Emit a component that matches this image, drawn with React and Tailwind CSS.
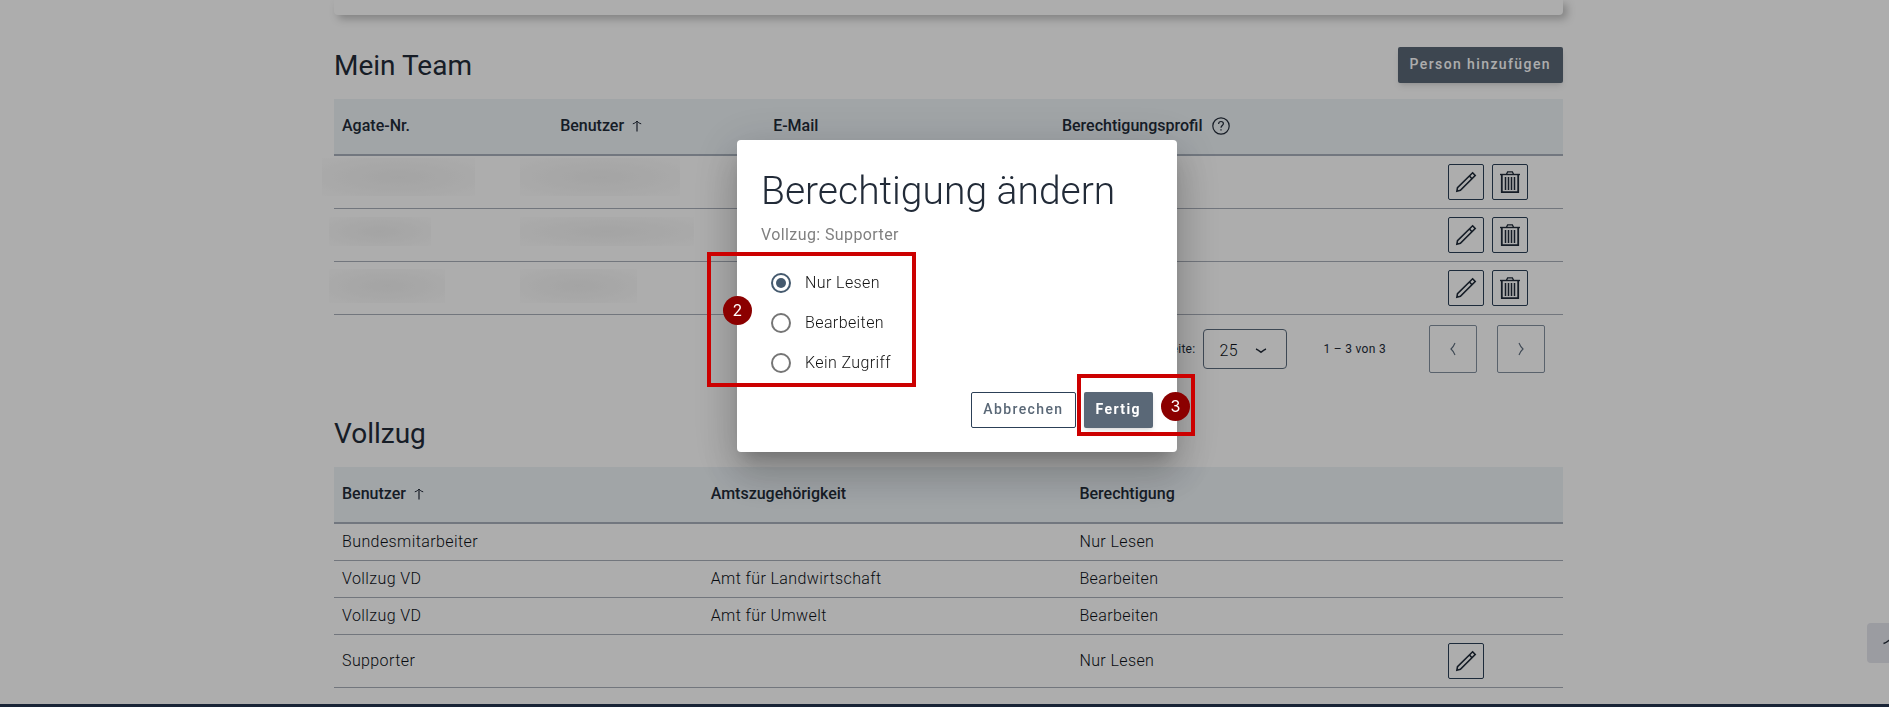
import React from "react";

const teamRows = [
  { first: "ml-[-20px] w-[153px] h-[38px] mt-[2px]", second: "ml-[-40px] w-[160px] h-[38px] mt-[2px]" },
  { first: "ml-[-13px] w-[102px] h-[29px] mt-[8px]", second: "ml-[-40px] w-[174px] h-[29px] mt-[8px]" },
  { first: "ml-[-13px] w-[116px] h-[34px] mt-[7px]", second: "ml-[-40px] w-[117px] h-[34px] mt-[7px]" },
];

const officeRows = [
  { user: "Bundesmitarbeiter", office: "", right: "Nur Lesen" },
  { user: "Vollzug VD", office: "Amt für Landwirtschaft", right: "Bearbeiten" },
  { user: "Vollzug VD", office: "Amt für Umwelt", right: "Bearbeiten" },
  { user: "Supporter", office: "", right: "Nur Lesen", editable: true },
];

const options = ["Nur Lesen", "Bearbeiten", "Kein Zugriff"];

function PencilIcon() {
  return (
    <svg viewBox="0 0 24 24" className="size-6" fill="none" stroke="currentColor" strokeWidth="1.6" aria-hidden="true">
      <path d="M18.6 2.8 21.2 5.5 6.4 20.3 2.9 21.2 3.5 17.7Z" />
      <path d="M15.4 6 18 8.7" />
    </svg>
  );
}

function TrashIcon() {
  return (
    <svg viewBox="0 0 24 24" className="size-6" fill="none" stroke="currentColor" aria-hidden="true">
      <path d="M2 4.5H22" strokeWidth="1.4" />
      <path d="M8.5 4.2 9.6 1.9H14.4L15.5 4.2" strokeWidth="1.3" />
      <path d="M3.8 5V22.2H20.2V5" strokeWidth="1.8" />
      <path d="M7.5 7V20M10.5 7V20M13.5 7V20M16.5 7V20" strokeWidth="1.5" />
    </svg>
  );
}

function SortArrow() {
  return (
    <svg viewBox="0 0 10 12" className="ml-2 h-3 w-2.5" fill="none" stroke="currentColor" aria-hidden="true">
      <path d="M5 1V11.5" strokeWidth="1.2" />
      <path d="M0.8 3.8C2.6 3.4 4 2.4 5 1 6 2.4 7.4 3.4 9.2 3.8" strokeWidth="1" />
    </svg>
  );
}

function IconButton({ label, children }) {
  return (
    <button type="button" aria-label={label} className="flex size-9 items-center justify-center rounded-xs border border-[#2c4057] text-[#1f2a38]">
      {children}
    </button>
  );
}

function HeadCell({ children, sorted }) {
  return (
    <th scope="col" className="h-[57px] border-b-2 border-[#a8b0bc] px-2 pb-0.5 text-left font-medium">
      <span className="flex items-center">
        {children}
        {sorted && <SortArrow />}
      </span>
    </th>
  );
}

function Redacted({ className }) {
  return (
    <div className={"bg-[radial-gradient(ellipse_at_center,#f2f2f2_0%,#f8f8f8_55%,#fefefe_100%)] " + className} />
  );
}

function TeamTable() {
  return (
    <table className="w-full table-fixed border-separate border-spacing-0">
      <colgroup>
        <col className="w-[17.75%]" />
        <col className="w-[17.33%]" />
        <col className="w-[23.5%]" />
        <col className="w-[31.42%]" />
        <col className="w-[10%]" />
      </colgroup>
      <thead className="bg-[#edf3f7]">
        <tr>
          <HeadCell>Agate-Nr.</HeadCell>
          <HeadCell sorted>Benutzer</HeadCell>
          <HeadCell>E-Mail</HeadCell>
          <HeadCell>
            Berechtigungsprofil
            <svg viewBox="0 0 18 18" className="ml-2.5 size-[18px]" fill="none" stroke="currentColor" role="img" aria-label="Hilfe">
              <circle cx="9" cy="9" r="8.2" strokeWidth="1.2" />
              <path d="M6.6 7C6.6 5.4 7.6 4.5 9 4.5 10.4 4.5 11.4 5.4 11.4 6.7 11.4 8.4 9 8.7 9 10.7" strokeWidth="1.2" />
              <path d="M9 12.2V13.6" strokeWidth="1.3" />
            </svg>
          </HeadCell>
          <HeadCell />
        </tr>
      </thead>
      <tbody>
        {teamRows.map((row, i) => (
          <tr key={i}>
            <td className="h-[53px] border-b border-[#a8aeb9] px-2 py-0 align-top"><Redacted className={row.first} /></td>
            <td className="border-b border-[#a8aeb9] px-2 py-0 align-top"><Redacted className={row.second} /></td>
            <td className="border-b border-[#a8aeb9]" />
            <td className="border-b border-[#a8aeb9]" />
            <td className="border-b border-[#a8aeb9] p-2">
              <div className="flex gap-2">
                <IconButton label="Bearbeiten"><PencilIcon /></IconButton>
                <IconButton label="Löschen"><TrashIcon /></IconButton>
              </div>
            </td>
          </tr>
        ))}
      </tbody>
    </table>
  );
}

function Pagination() {
  return (
    <div className="flex items-center justify-end py-2.5 pr-[18px] text-xs tracking-wide">
      <label htmlFor="page-size" className="mr-2">Elemente pro Seite:</label>
      <div className="relative">
        <select id="page-size" defaultValue="25" className="h-10 w-[84px] appearance-none rounded border border-[#5b6b7d] pt-1 pl-[15px] text-base font-light tracking-wide text-[#0c1118]">
          <option>10</option>
          <option>25</option>
          <option>50</option>
        </select>
        <svg viewBox="0 0 12 6" className="pointer-events-none absolute top-[19px] right-5 h-1.5 w-3" fill="none" stroke="currentColor" strokeWidth="1.4" aria-hidden="true">
          <path d="M1 1C2.8 1.6 4.2 2.8 6 4.3 7.8 2.8 9.2 1.6 11 1" />
        </svg>
      </div>
      <span className="ml-9">1 – 3 von 3</span>
      <div className="ml-[43px] flex gap-5 text-[#5c6b7c]">
        <button type="button" aria-label="Vorherige Seite" className="flex size-12 items-center justify-center rounded-xs border border-[#8491a0]">
          <svg viewBox="0 0 6 14" className="h-3.5 w-1.5" fill="none" stroke="currentColor" strokeWidth="1.1"><path d="M5 1C4 3.5 2.8 5.5 1 7 2.8 8.5 4 10.5 5 13" /></svg>
        </button>
        <button type="button" aria-label="Nächste Seite" className="flex size-12 items-center justify-center rounded-xs border border-[#8491a0]">
          <svg viewBox="0 0 6 14" className="h-3.5 w-1.5" fill="none" stroke="currentColor" strokeWidth="1.1"><path d="M1 1C2 3.5 3.2 5.5 5 7 3.2 8.5 2 10.5 1 13" /></svg>
        </button>
      </div>
    </div>
  );
}

function OfficeTable() {
  return (
    <table className="w-full table-fixed border-separate border-spacing-0">
      <colgroup>
        <col className="w-[30%]" />
        <col className="w-[30%]" />
        <col className="w-[30%]" />
        <col className="w-[10%]" />
      </colgroup>
      <thead className="bg-[#edf3f7]">
        <tr>
          <HeadCell sorted>Benutzer</HeadCell>
          <HeadCell>Amtszugehörigkeit</HeadCell>
          <HeadCell>Berechtigung</HeadCell>
          <HeadCell />
        </tr>
      </thead>
      <tbody className="font-light tracking-wide text-[#0c1118]">
        {officeRows.map((row, i) => (
          <tr key={i}>
            <td className="h-[37px] border-b border-[#a8aeb9] px-2">{row.user}</td>
            <td className="border-b border-[#a8aeb9] px-2">{row.office}</td>
            <td className="border-b border-[#a8aeb9] px-2">{row.right}</td>
            <td className="border-b border-[#a8aeb9] px-2">
              {row.editable && (
                <div className="py-2">
                  <IconButton label="Bearbeiten"><PencilIcon /></IconButton>
                </div>
              )}
            </td>
          </tr>
        ))}
      </tbody>
    </table>
  );
}

function Marker({ children, className }) {
  return (
    <span className={"absolute flex size-[29px] items-center justify-center rounded-full bg-[#8b0000] pb-0.5 font-[Inter,sans-serif] text-base text-white " + className}>
      {children}
    </span>
  );
}

function PermissionDialog() {
  return (
    <div className="fixed inset-0 flex items-start justify-center bg-black/32 pt-[140px] pl-[25px]">
      <div role="dialog" aria-modal="true" aria-labelledby="dialog-title" className="relative w-[440px] rounded bg-white p-6 shadow-[0_11px_15px_-7px_rgba(0,0,0,0.2),0_24px_38px_3px_rgba(0,0,0,0.14),0_9px_46px_8px_rgba(0,0,0,0.12)]">
        <h2 id="dialog-title" className="text-[39px] leading-[54px] font-light">Berechtigung ändern</h2>
        <p className="mt-[5px] text-base tracking-wide text-[#808080]">Vollzug: Supporter</p>
        <div role="radiogroup" aria-label="Zugriffsrecht" className="mt-4 font-light tracking-wide text-[#111111]">
          {options.map((name, i) => (
            <label key={name} className="flex h-10 items-center gap-3.5 pl-2.5">
              <input
                type="radio"
                name="permission"
                defaultChecked={i === 0}
                className="grid size-5 appearance-none place-content-center rounded-full border-2 border-[#757575] before:size-2.5 before:rounded-full checked:border-[#455a6e] checked:before:bg-[#455a6e]"
              />
              {name}
            </label>
          ))}
        </div>
        <div className="mt-[9px] flex justify-end gap-2 text-sm font-medium tracking-widest">
          <button type="button" className="h-9 rounded-xs border border-[#2c4057] px-[11px] pb-0.5 text-[#5a6877]">Abbrechen</button>
          <button type="button" className="h-9 rounded-xs bg-[#5a6877] px-3 pb-0.5 font-bold text-white shadow-md">Fertig</button>
        </div>
        <div className="absolute top-[112px] left-[-30px] h-[135px] w-[209px] border-4 border-[#cc0000]" />
        <Marker className="top-[156px] left-[-14px]">2</Marker>
        <div className="absolute top-[234px] left-[340px] h-[62px] w-[118px] border-4 border-[#cc0000]" />
        <Marker className="top-[252px] left-[424px]">3</Marker>
      </div>
    </div>
  );
}

export default function App() {
  return (
    <div className="flex min-h-screen flex-col bg-white font-[Roboto,sans-serif] text-base text-[#222b38]">
      <main className="pl-2">
        <div className="mx-auto max-w-[1229px]">
          <div className="h-[15px] rounded-b bg-white shadow-[4px_4px_8px_rgba(0,0,0,0.25)]" />
          <section className="mt-8">
            <div className="mb-4 flex items-center justify-between">
              <h1 className="pt-0.5 text-[28px] leading-[34px]">Mein Team</h1>
              <button type="button" className="h-9 rounded-xs bg-[#5a6877] px-3 pb-0.5 text-sm font-medium tracking-widest text-white shadow-md">Person hinzufügen</button>
            </div>
            <TeamTable />
            <Pagination />
          </section>
          <section className="mt-8">
            <h1 className="mb-4 pt-0.5 text-[28px] leading-[34px]">Vollzug</h1>
            <OfficeTable />
          </section>
        </div>
      </main>
      <footer className="mt-4 min-h-[3px] flex-1 bg-[#263650]" />
      <button type="button" aria-label="Nach oben" className="fixed right-0 bottom-11 flex h-10 w-[22px] items-center overflow-hidden rounded-l bg-[#e5e6ed] pl-4">
        <svg viewBox="0 0 16 8" className="mb-1 h-2 w-4 shrink-0" fill="none" stroke="currentColor" strokeWidth="1.4"><path d="M0.5 6.5C3.5 5.5 6 3.5 8 1.5 10 3.5 12.5 5.5 15.5 6.5" /></svg>
      </button>
      <PermissionDialog />
    </div>
  );
}
